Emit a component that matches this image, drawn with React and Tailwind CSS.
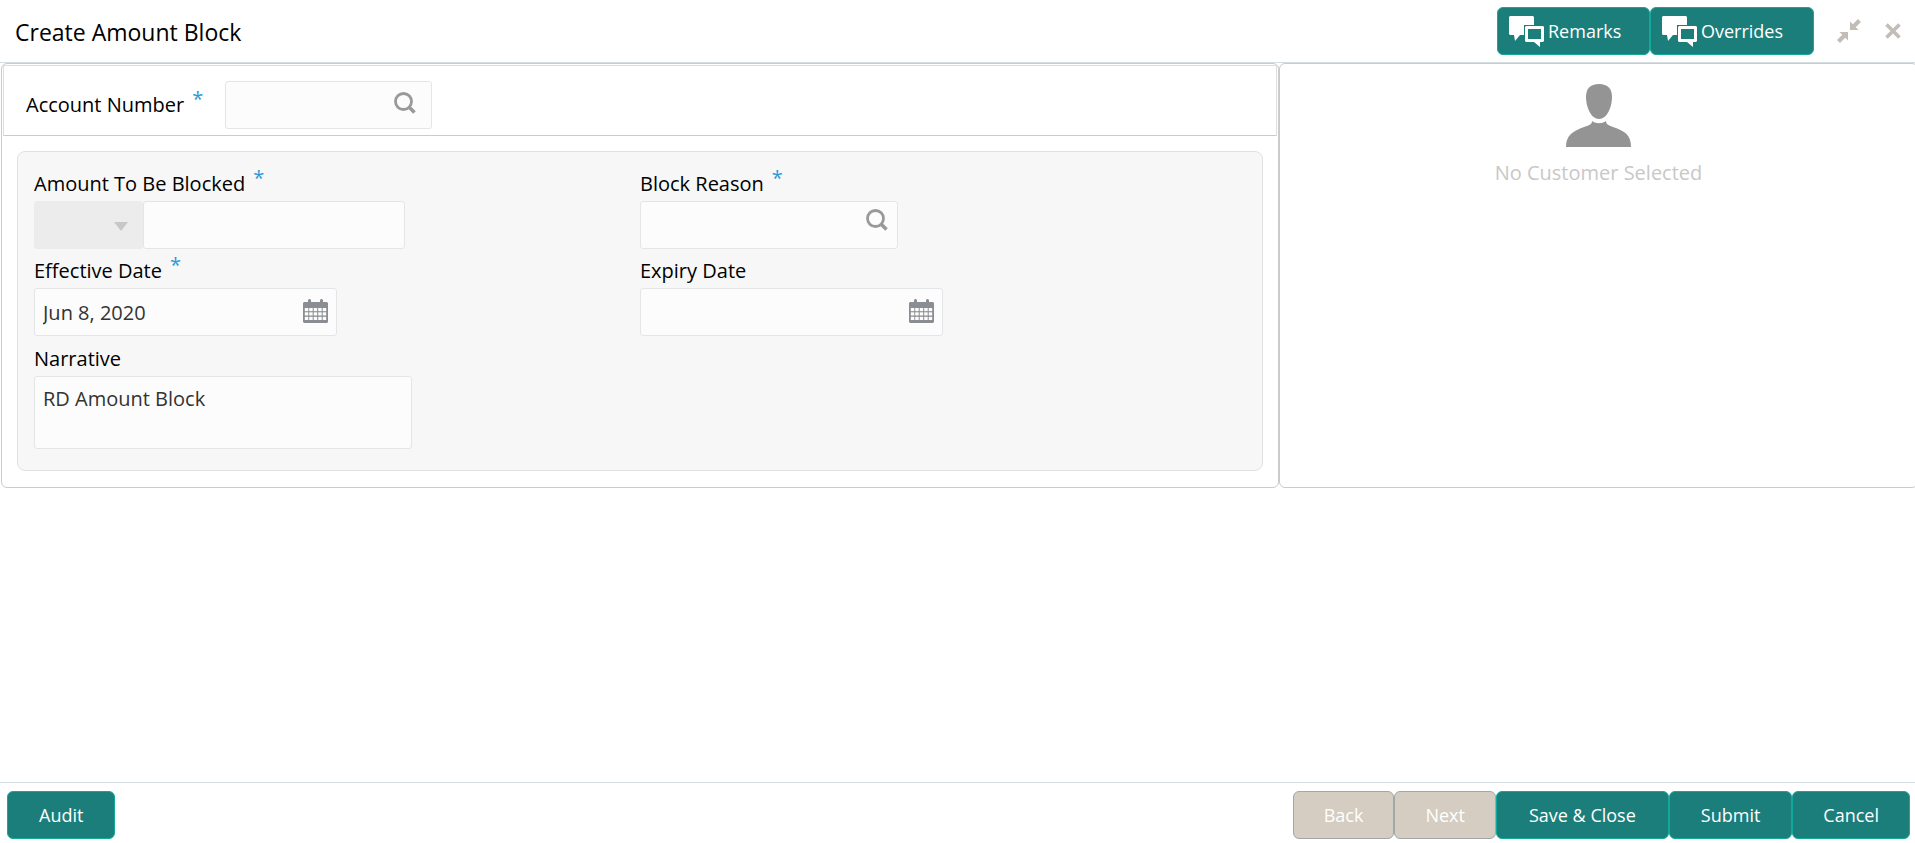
import { useState } from "react"

const BORDER = "border-[#c9cbcd]"
const INPUT = "h-12 rounded-[3px] border border-[#e3e5e6] bg-[#fcfcfc] px-2 text-xl text-[#333] focus:outline-none"

function SearchIcon() {
  return (
    <svg width="22" height="22" viewBox="0 0 22 22" fill="none" stroke="#999">
      <circle cx="9.5" cy="9.5" r="8" strokeWidth="2.8" />
      <path d="M14.5 14.5 L20.5 20.5" strokeWidth="3.6" />
    </svg>
  )
}

function CalendarIcon() {
  return (
    <svg width="25" height="24" viewBox="0 0 25 24">
      <path fill="#8a8d91" d="M1 3h23l1 1v19l-1 1H1l-1-1V4z M5 1l1-1h1l1 1v3H5z M17 1l1-1h1l1 1v3h-3z" />
      <g fill="#fcfcfc">
        {[9, 13.3, 17.8].map(y =>
          [1.8, 6.2, 10.7, 15.2, 19.7].map(x => <rect key={`${x}-${y}`} x={x} y={y} width="3.5" height="3.2" />)
        )}
      </g>
    </svg>
  )
}

function ChatIcon() {
  return (
    <svg width="35" height="31" viewBox="0 0 35 31">
      <path fill="#fff" d="M1 0h23l1 1v8H15v10h-4l-5 6-1-6H1l-1-1V1z" />
      <path fill="#fff" fillRule="evenodd" d="M17 10h17l1 1v14l-1 1h-3v5l-6-5h-8l-1-1V11z M19 13v10h13V13z" />
    </svg>
  )
}

function Label({ htmlFor, required, className = "pt-1", children }) {
  return (
    <label htmlFor={htmlFor} className={`flex h-[39px] items-center text-xl text-black ${className}`}>
      {children}
      {required && <span className="mb-3 ml-2 text-xl text-[#2a9ad6]">*</span>}
    </label>
  )
}

function Button({ className = "justify-center px-[30px]", children, ...props }) {
  return (
    <button
      type="button"
      className={`flex h-12 items-center rounded-md border border-[#12a99b] bg-[#1b7e7a] text-lg text-white disabled:border-[#a1a8aa] disabled:bg-[#d5cdc1] ${className}`}
      {...props}
    >
      {children}
    </button>
  )
}

export default function App() {
  const [account, setAccount] = useState("")
  const [amount, setAmount] = useState("")
  const [reason, setReason] = useState("")
  const [effective, setEffective] = useState("Jun 8, 2020")
  const [expiry, setExpiry] = useState("")
  const [narrative, setNarrative] = useState("RD Amount Block")

  return (
    <div className="flex min-h-screen flex-col overflow-hidden bg-white font-['Open_Sans','Noto_Sans',sans-serif]">
      <header className="flex h-[63px] items-center border-b border-[#d6dde1] pr-[14px] pl-[15px]">
        <h1 className="pt-0.5 text-[23px] text-black">Create Amount Block</h1>
        <div className="ml-auto flex items-center">
          <Button className="w-[153px] gap-1 pl-[11px]">
            <ChatIcon />
            Remarks
          </Button>
          <Button className="w-[164px] gap-1 pl-[11px]">
            <ChatIcon />
            Overrides
          </Button>
          <button type="button" aria-label="Collapse" className="ml-[23px]">
            <svg width="24" height="24" viewBox="0 0 24 24" fill="#c2bdb6">
              <path d="M13 2.5v8.5h8.5l-2.8-2.8L24 3l-3-3-5.2 5.3z" />
              <path d="M11 21.5V13H2.5l2.8 2.8L0 21l3 3 5.2-5.3z" />
            </svg>
          </button>
          <button type="button" aria-label="Close" className="ml-6">
            <svg width="16" height="16" viewBox="0 0 16 16" fill="none" stroke="#c2bdb6" strokeWidth="3.6">
              <path d="M1.5 1.5l13 13M14.5 1.5l-13 13" />
            </svg>
          </button>
        </div>
      </header>

      <main className="-mr-[3px] ml-px grid grid-cols-3">
        <section className={`col-span-2 rounded-md border p-px ${BORDER}`}>
          <div className="flex h-[71px] items-center border border-[#dcdedf] border-b-[#c9cbcd] pt-[9px] pl-[22px]">
            <Label htmlFor="account" required className="pt-0">Account Number</Label>
            <div className="relative ml-[22px]">
              <input id="account" value={account} onChange={e => setAccount(e.target.value)} className={`block w-[207px] ${INPUT}`} />
              <button type="button" aria-label="Search account" className="absolute top-[11px] right-4">
                <SearchIcon />
              </button>
            </div>
          </div>

          <div className="mx-3.5 my-[15px] grid grid-cols-2 rounded-lg border border-[#dfe1e2] bg-[#f7f7f7] px-4 pt-2.5 pb-[21px]">
            <div>
              <Label htmlFor="amount" required>Amount To Be Blocked</Label>
              <div className="flex">
                <div className="relative">
                  <select aria-label="Currency" className="block h-12 w-[109px] appearance-none rounded-[3px] bg-[#ececec]" />
                  <svg className="pointer-events-none absolute top-[21px] right-[15px]" width="14" height="9" viewBox="0 0 14 9">
                    <path fill="#c5c7c9" d="M0 0h14L7 9z" />
                  </svg>
                </div>
                <input id="amount" value={amount} onChange={e => setAmount(e.target.value)} className={`w-[262px] ${INPUT}`} />
              </div>
            </div>

            <div>
              <Label htmlFor="reason" required>Block Reason</Label>
              <div className="relative w-[258px]">
                <input id="reason" value={reason} onChange={e => setReason(e.target.value)} className={`block w-full ${INPUT}`} />
                <button type="button" aria-label="Search reason" className="absolute top-2 right-2.5">
                  <SearchIcon />
                </button>
              </div>
            </div>

            <div>
              <Label htmlFor="effective" required>Effective Date</Label>
              <div className="relative w-[303px]">
                <input id="effective" value={effective} onChange={e => setEffective(e.target.value)} className={`block w-full ${INPUT}`} />
                <button type="button" aria-label="Pick effective date" className="absolute top-[11px] right-[9px]">
                  <CalendarIcon />
                </button>
              </div>
            </div>

            <div>
              <Label htmlFor="expiry">Expiry Date</Label>
              <div className="relative w-[303px]">
                <input id="expiry" value={expiry} onChange={e => setExpiry(e.target.value)} className={`block w-full ${INPUT}`} />
                <button type="button" aria-label="Pick expiry date" className="absolute top-[11px] right-[9px]">
                  <CalendarIcon />
                </button>
              </div>
            </div>

            <div className="pt-px">
              <Label htmlFor="narrative">Narrative</Label>
              <textarea
                id="narrative"
                value={narrative}
                onChange={e => setNarrative(e.target.value)}
                className="block h-[73px] w-[378px] resize-none rounded-[3px] border border-[#e3e5e6] bg-[#fcfcfc] px-2 py-2 text-xl text-[#333] focus:outline-none"
              />
            </div>
          </div>
        </section>

        <aside className={`flex flex-col items-center rounded-md border pt-5 ${BORDER}`}>
          <svg width="66" height="64" viewBox="0 0 66 64" fill="#949494">
            <path d="M33 0c9 0 13 5 13 13 0 10-5 22-13 22S20 23 20 13C20 5 24 0 33 0z" />
            <path d="M26 37c4 3 10 3 14 0 0 3 2 4 7 6 12 4 18 8 18 20H0c0-12 7-16 18-20 6-2 8-3 8-6z" />
          </svg>
          <p className="mt-[11px] text-xl text-[#c8c8c8]">No Customer Selected</p>
        </aside>
      </main>

      <footer className="mt-auto flex border-t border-[#d6dde1] pt-2 pr-[5px] pb-1 pl-[7px]">
        <Button className="px-[31px]">Audit</Button>
        <div className="ml-auto flex">
          <Button disabled>Back</Button>
          <Button disabled>Next</Button>
          <Button className="px-8">Save &amp; Close</Button>
          <Button className="px-[31px]">Submit</Button>
          <Button>Cancel</Button>
        </div>
      </footer>
    </div>
  )
}
